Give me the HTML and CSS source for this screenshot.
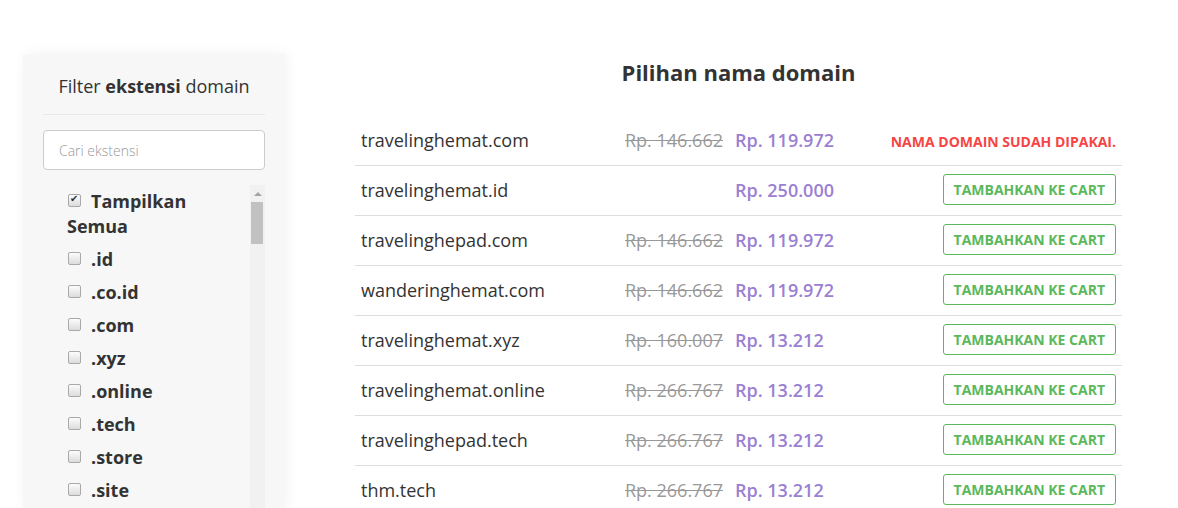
FILE: index.html
```html
<!DOCTYPE html>
<html>
<head>
<meta charset="utf-8">
<title>Pilihan nama domain</title>
<link rel="stylesheet" href="styles.css">
</head>
<body>
<div class="page">
  <div class="sidebar">
    <h3 class="sidebar-title">Filter <b>ekstensi</b> domain</h3>
    <input type="text" class="search" placeholder="Cari ekstensi">
    <div class="ext-box">
      <ul class="ext-list">
        <li><input type="checkbox" class="check" checked>Tampilkan Semua</li>
        <li><input type="checkbox" class="check">.id</li>
        <li><input type="checkbox" class="check">.co.id</li>
        <li><input type="checkbox" class="check">.com</li>
        <li><input type="checkbox" class="check">.xyz</li>
        <li><input type="checkbox" class="check">.online</li>
        <li><input type="checkbox" class="check">.tech</li>
        <li><input type="checkbox" class="check">.store</li>
        <li><input type="checkbox" class="check">.site</li>
      </ul>
      <div class="scrollbar">
        <div class="scroll-up"></div>
        <div class="scroll-thumb"></div>
      </div>
    </div>
  </div>

  <div class="main">
    <h2 class="title">Pilihan nama domain</h2>
    <div class="results">
      <div class="row">
        <div class="name">travelinghemat.com</div>
        <div class="old">Rp. 146.662</div>
        <div class="price">Rp. 119.972</div>
        <div class="action"><span class="taken">NAMA DOMAIN SUDAH DIPAKAI.</span></div>
      </div>
      <div class="row">
        <div class="name">travelinghemat.id</div>
        <div class="old"></div>
        <div class="price">Rp. 250.000</div>
        <div class="action"><button class="btn-cart">TAMBAHKAN KE CART</button></div>
      </div>
      <div class="row">
        <div class="name">travelinghepad.com</div>
        <div class="old">Rp. 146.662</div>
        <div class="price">Rp. 119.972</div>
        <div class="action"><button class="btn-cart">TAMBAHKAN KE CART</button></div>
      </div>
      <div class="row">
        <div class="name">wanderinghemat.com</div>
        <div class="old">Rp. 146.662</div>
        <div class="price">Rp. 119.972</div>
        <div class="action"><button class="btn-cart">TAMBAHKAN KE CART</button></div>
      </div>
      <div class="row">
        <div class="name">travelinghemat.xyz</div>
        <div class="old">Rp. 160.007</div>
        <div class="price">Rp. 13.212</div>
        <div class="action"><button class="btn-cart">TAMBAHKAN KE CART</button></div>
      </div>
      <div class="row">
        <div class="name">travelinghemat.online</div>
        <div class="old">Rp. 266.767</div>
        <div class="price">Rp. 13.212</div>
        <div class="action"><button class="btn-cart">TAMBAHKAN KE CART</button></div>
      </div>
      <div class="row">
        <div class="name">travelinghepad.tech</div>
        <div class="old">Rp. 266.767</div>
        <div class="price">Rp. 13.212</div>
        <div class="action"><button class="btn-cart">TAMBAHKAN KE CART</button></div>
      </div>
      <div class="row">
        <div class="name">thm.tech</div>
        <div class="old">Rp. 266.767</div>
        <div class="price">Rp. 13.212</div>
        <div class="action"><button class="btn-cart">TAMBAHKAN KE CART</button></div>
      </div>
    </div>
  </div>
</div>
</body>
</html>
```

FILE: styles.css
```css
body{margin:0;padding:0;background:#fff;color:#333;font-family:"Open Sans","Liberation Sans",sans-serif;overflow:hidden;}
.page{display:flex;align-items:flex-start;padding:54px 0 0 23px;}

.sidebar{width:222px;padding:0 20px;background:#f7f7f7;box-shadow:2px 0 14px rgba(0,0,0,0.05);height:454px;flex-shrink:0;}
.sidebar-title{margin:0;padding:19px 0 15px;font-size:18px;line-height:26px;font-weight:400;text-align:center;border-bottom:1px solid #e8e8e8;}
.sidebar-title b{font-weight:700;}
.search{display:block;box-sizing:border-box;width:100%;height:40px;margin-top:15px;padding:0 15px;border:1px solid #ccc;border-radius:4px;background:#fff;font-family:inherit;font-size:14px;font-weight:300;color:#555;outline:none;}
.search::placeholder{color:#999;}

.ext-box{display:flex;margin-top:15px;height:323px;overflow:hidden;}
.ext-list{flex:1;list-style:none;margin:0;padding:4px 0 0 24px;font-size:18px;font-weight:700;line-height:25px;}
.ext-list li{margin-bottom:8px;}
.check{-webkit-appearance:none;appearance:none;box-sizing:border-box;width:13px;height:13px;margin:0 10px 0 1px;vertical-align:1px;border:1px solid #a9a9a9;border-radius:2px;background:linear-gradient(#fcfcfc,#dcdcdc);position:relative;}
.check:checked::after{content:"\2714";position:absolute;left:1px;top:-6px;font-size:10px;line-height:20px;color:#333;}

.scrollbar{width:15px;background:#f1f1f1;display:flex;flex-direction:column;}
.scroll-up{height:17px;display:flex;align-items:center;justify-content:center;}
.scroll-up::before{content:"";border-left:4px solid transparent;border-right:4px solid transparent;border-bottom:4px solid #a3a3a3;}
.scroll-thumb{height:42px;margin:0 2px 0 1px;background:#c1c1c1;}

.main{width:767px;margin-left:70px;}
.title{margin:4px 0 30px;font-size:22px;line-height:28px;font-weight:700;text-align:center;color:#333;}
.row{display:grid;grid-template-columns:252px 110px 130px 263px;align-items:center;box-sizing:border-box;height:50px;padding:0 6px 2px;border-bottom:1px solid #ddd;font-size:18px;}
.name{color:#333;}
.old{text-align:right;color:#999;text-decoration:line-through;}
.price{padding-left:12px;color:#9a80d2;font-weight:600;}
.action{text-align:right;}
.taken{font-size:14px;font-weight:700;color:#f54545;}
.btn-cart{height:31px;padding:0 10px;border:1px solid #5cb85c;border-radius:3px;background:#fff;color:#5cb85c;font-family:inherit;font-size:14px;font-weight:700;}
```
